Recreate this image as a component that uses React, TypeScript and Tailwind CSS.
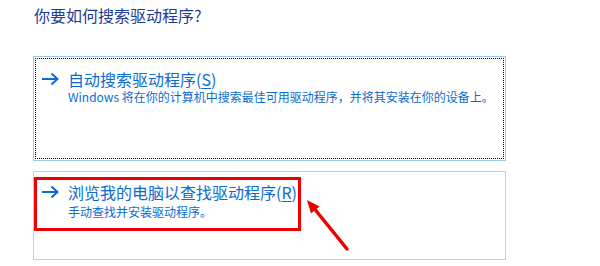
import React from 'react';

const BlueArrow: React.FC = () => (
    <svg width="18" height="14" viewBox="0 0 18 14" className="shrink-0" xmlns="http://www.w3.org/2000/svg">
        <path d="M1 7h15M10.5 1.5L16.5 7l-6 5.5" fill="none" stroke="#0a6cd0" strokeWidth="2" />
    </svg>
);

export default function App() {
    return (
        <div
            className="relative w-[600px] h-[266px] bg-white pl-[33px] pt-[3px] overflow-hidden"
            style={{ fontFamily: '"Noto Sans CJK SC", "Noto Sans", sans-serif' }}
        >
            {/* Header */}
            <h1 className="text-[16px] leading-[24px] text-[#1d3b95] pl-px font-normal">你要如何搜索驱动程序?</h1>

            {/* Option 1: automatic search (focused) */}
            <div className="mt-[29px] w-[473px] h-[105px] border border-[#9cc9ef] p-px">
                <div className="h-full border border-dotted border-black pl-[5px] pt-[10px]">
                    <div className="flex items-start gap-[9px]">
                        <div className="pt-[3px]">
                            <BlueArrow />
                        </div>
                        <div>
                            <div className="text-[16px] leading-[20px] text-[#0a6cd0]">
                                自动搜索驱动程序(<span className="underline underline-offset-2">S</span>)
                            </div>
                            <div className="text-[12px] leading-[16px] text-[#0a6cd0]">
                                Windows 将在你的计算机中搜索最佳可用驱动程序，并将其安装在你的设备上。
                            </div>
                        </div>
                    </div>
                </div>
            </div>

            {/* Option 2: browse (highlighted with red annotation box) */}
            <div className="mt-[10px] w-[473px] h-[89px] border border-[#cccccc] pt-[5px]">
                <div className="w-[267px] h-[54px] border-[3px] border-[#ee0000] pl-[4px] pt-[2px]">
                    <div className="flex items-start gap-[9px]">
                        <div className="pt-[3px]">
                            <BlueArrow />
                        </div>
                        <div>
                            <div className="text-[16px] leading-[20px] text-[#0a6cd0] whitespace-nowrap">
                                浏览我的电脑以查找驱动程序(<span className="underline underline-offset-2">R</span>)
                            </div>
                            <div className="mt-[2px] text-[12px] leading-[16px] text-[#0a6cd0]">
                                手动查找并安装驱动程序。
                            </div>
                        </div>
                    </div>
                </div>
            </div>

            {/* Red annotation arrow */}
            <svg
                className="absolute left-[300px] top-[194px]"
                width="55"
                height="62"
                viewBox="0 0 55 62"
                xmlns="http://www.w3.org/2000/svg"
            >
                <path d="M47 55L13 13" stroke="#ee0000" strokeWidth="3.5" strokeLinecap="round" />
                <path d="M7 6L19.5 12.5L11 19.5Z" fill="#ee0000" />
            </svg>
        </div>
    );
}
